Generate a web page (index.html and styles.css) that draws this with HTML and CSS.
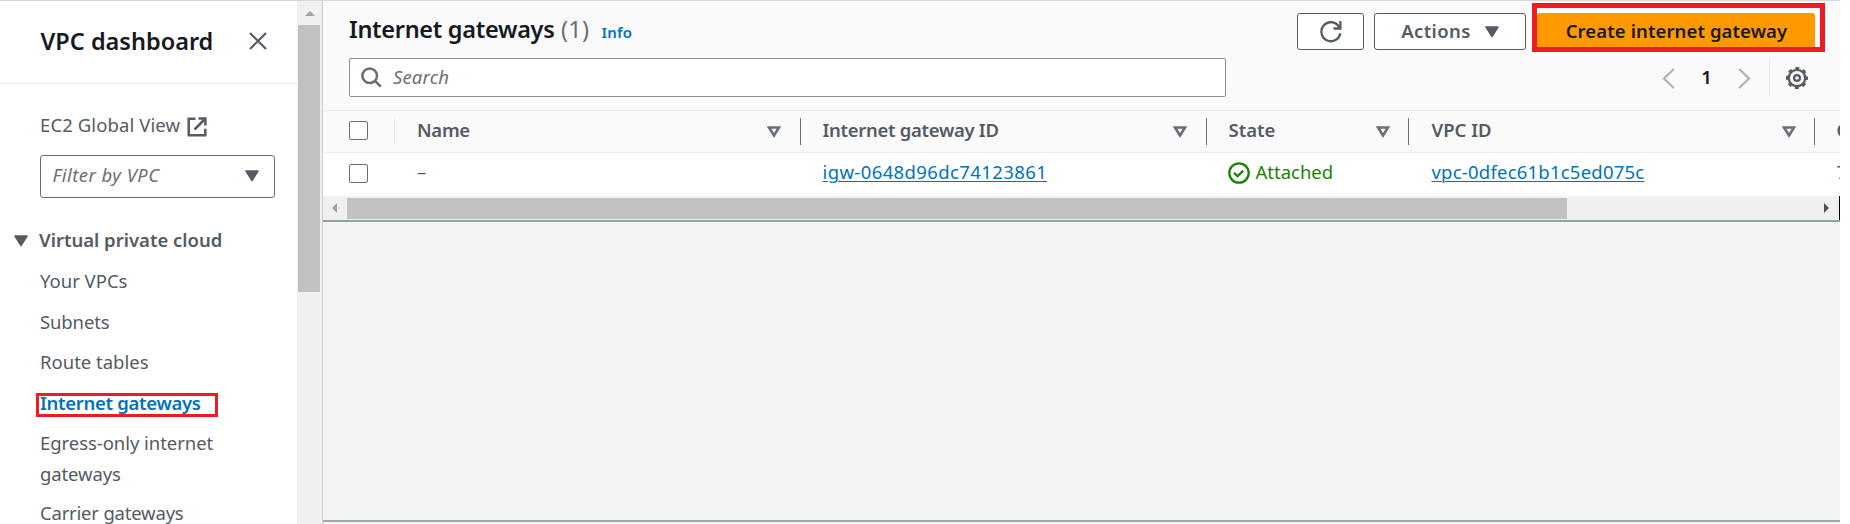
FILE: index.html
```html
<!DOCTYPE html>
<html lang="en">
<head>
<meta charset="utf-8">
<title>Internet gateways | VPC</title>
<link rel="stylesheet" href="styles.css">
</head>
<body>
<div class="app">
  <nav class="sidebar">
    <header class="side-head">
      <h2 class="side-title"><span class="t">VPC dashboard</span></h2>
      <svg class="close" width="20" height="20" viewBox="0 0 20 20"><path d="M2 2l16 16M18 2L2 18" fill="none" stroke="#545b64" stroke-width="2.2"/></svg>
    </header>
    <div class="global"><span class="t t-global">EC2 Global View</span>
      <svg width="20" height="20" viewBox="0 0 20 20"><path d="M8.500 1.800H1.700v16.500h16.600v-6.600M11.500 1.600h6.900v7M18 2L7.500 12.500" fill="none" stroke="#545b64" stroke-width="2.500"/></svg>
    </div>
    <div class="filter"><span class="t t-filter">Filter by VPC</span>
      <svg width="14" height="12" viewBox="0 0 14 12"><path d="M1 1h12L7 10.500z" fill="#545b64" stroke="#545b64" stroke-width="1.500" stroke-linejoin="round"/></svg>
    </div>
    <div class="group">
      <svg width="14" height="12" viewBox="0 0 14 12"><path d="M1 1h12L7 10.500z" fill="#545b64" stroke="#545b64" stroke-width="1.500" stroke-linejoin="round"/></svg>
      <span class="t t-group">Virtual private cloud</span>
    </div>
    <ul class="links">
      <li><span class="t t-your">Your VPCs</span></li>
      <li><span class="t t-sub">Subnets</span></li>
      <li><span class="t t-route">Route tables</span></li>
      <li class="active"><span class="t t-igw">Internet gateways</span><span class="mark mark-link"></span></li>
      <li><span class="t t-egress">Egress-only internet</span><br><span class="t t-gate">gateways</span></li>
      <li><span class="t t-carrier">Carrier gateways</span></li>
    </ul>
  </nav>
  <div class="vscroll">
    <svg width="10" height="5" viewBox="0 0 10 5"><path d="M5 0l5 5H0z" fill="#a3a3a3"/></svg>
    <div class="vthumb"></div>
  </div>
  <main class="main">
    <section class="panel">
      <div class="toolbar">
        <div class="left">
          <h1 class="title"><span class="t t-title">Internet gateways</span><span class="t count">(1)</span><span class="t info">Info</span></h1>
          <div class="search">
            <svg width="21" height="21" viewBox="0 0 21 21"><circle cx="8.700" cy="8.700" r="7.300" fill="none" stroke="#687078" stroke-width="2.500"/><path d="M13.800 13.800l6 5.800" stroke="#687078" stroke-width="2.600"/></svg>
            <span class="t t-search">Search</span>
          </div>
        </div>
        <div class="right">
          <div class="buttons">
            <div class="btn refresh"><svg width="24" height="24" viewBox="0 0 24 24"><path d="M21.300 13.200a9.500 9.500 0 1 1-2.200-7.700l1.600 2.600" fill="none" stroke="#545b64" stroke-width="2.300"/><path d="M21.400 1v7.500h-7" fill="none" stroke="#545b64" stroke-width="2.300"/></svg></div>
            <div class="btn actions"><span class="t t-actions">Actions</span><svg width="14" height="12" viewBox="0 0 14 12"><path d="M1 1h12L7 10.500z" fill="#545b64" stroke="#545b64" stroke-width="1.500" stroke-linejoin="round"/></svg></div>
            <div class="create"><span class="t t-create">Create internet gateway</span><span class="mark mark-btn"></span></div>
          </div>
          <div class="pager">
            <svg width="13" height="21" viewBox="0 0 13 21"><path d="M11.800 1L2 10.500l9.800 9.500" fill="none" stroke="#aab7b8" stroke-width="2.300"/></svg>
            <span class="t page">1</span>
            <svg width="13" height="21" viewBox="0 0 13 21"><path d="M1.200 1L11 10.500L1.200 20" fill="none" stroke="#aab7b8" stroke-width="2.300"/></svg>
            <span class="gear"><svg width="22" height="22" viewBox="0 0 22 22" fill="none" stroke="#545b64"><circle cx="11" cy="11" r="8.200" stroke-width="2.300"/><circle cx="11" cy="11" r="9.900" stroke-width="2.200" stroke-dasharray="4 3.775" stroke-dashoffset="2"/><circle cx="11" cy="11" r="2.900" stroke-width="2.300"/></svg></span>
          </div>
        </div>
      </div>
      <div class="row head">
        <div class="c-check"><span class="box"></span></div>
        <div class="cell c-name"><span class="t t-name">Name</span><svg class="sort" width="14" height="12" viewBox="0 0 14 12"><path d="M2 1.500h10L7 9.500z" fill="none" stroke="#687078" stroke-width="2.600"/></svg></div>
        <div class="cell c-id"><span class="t t-hid">Internet gateway ID</span><svg class="sort" width="14" height="12" viewBox="0 0 14 12"><path d="M2 1.500h10L7 9.500z" fill="none" stroke="#687078" stroke-width="2.600"/></svg></div>
        <div class="cell c-state"><span class="t t-state">State</span><svg class="sort" width="14" height="12" viewBox="0 0 14 12"><path d="M2 1.500h10L7 9.500z" fill="none" stroke="#687078" stroke-width="2.600"/></svg></div>
        <div class="cell c-vpc"><span class="t t-vpc">VPC ID</span><svg class="sort" width="14" height="12" viewBox="0 0 14 12"><path d="M2 1.500h10L7 9.500z" fill="none" stroke="#687078" stroke-width="2.600"/></svg></div>
        <div class="cell c-owner"><span class="t">O</span></div>
      </div>
      <div class="row data">
        <div class="c-check"><span class="box"></span></div>
        <div class="cell c-name"><span class="t">–</span></div>
        <div class="cell c-id"><span class="t link t-igwid">igw-0648d96dc74123861</span></div>
        <div class="cell c-state ok"><svg width="22" height="22" viewBox="0 0 22 22" fill="none" stroke="#1d8102" stroke-width="2.300"><circle cx="11" cy="11" r="9.700"/><path d="M6 10.800l3.600 3.400 5.600-5.600"/></svg><span class="t t-att">Attached</span></div>
        <div class="cell c-vpc"><span class="t link t-vpcid">vpc-0dfec61b1c5ed075c</span></div>
        <div class="cell c-owner"><span class="t">7</span></div>
      </div>
      <div class="hscroll">
        <svg width="5" height="10" viewBox="0 0 5 10"><path d="M5 0v10L0 5z" fill="#a3a3a3"/></svg>
        <div class="hthumb"></div>
        <svg class="fwd" width="5" height="10" viewBox="0 0 5 10"><path d="M0 0v10l5-5z" fill="#505050"/></svg>
      </div>
    </section>
    <div class="split"></div>
  </main>
</div>
</body>
</html>
```

FILE: styles.css
```css
* { box-sizing: border-box; }
body {
  margin: 0;
  width: 1850px;
  height: 524px;
  overflow: hidden;
  background: #fff;
  color: #545b64;
  font-family: "Noto Sans", "Open Sans", sans-serif;
  font-size: 18.5px;
  line-height: 30.5px;
}
svg { display: block; flex: none; }
.t { white-space: nowrap; }
.app { display: flex; width: 1840px; height: 524px; border-top: 1px solid #d5d7d7; }

.sidebar { width: 297px; flex: none; overflow: hidden; }
.side-head { display: flex; align-items: center; height: 83px; padding: 0 0 2px 40.5px; border-bottom: 1px solid #eaeded; }
.side-title { margin: 0; width: 207px; font-size: 23.5px; font-weight: 600; color: #16191f; }
.global { display: flex; align-items: center; gap: 7px; margin-top: 26px; padding-left: 40px; height: 31px; }
.global svg { margin-top: 2px; }
.filter {
  display: flex; align-items: center; justify-content: space-between;
  width: 235px; height: 43px; margin: 14px 0 0 40px; padding: 0 15px 3px 11.5px;
  border: 1px solid #687078; border-radius: 3px;
  font-style: italic; color: #687078;
}
.filter svg { margin-top: 2px; }
.group { display: flex; align-items: center; gap: 11px; height: 31px; margin: 27px 0 0 14px; font-weight: 600; }
.links { list-style: none; margin: 10px 0 0; padding: 0 0 0 40px; display: flex; flex-direction: column; gap: 10px; }
.links li { position: relative; }
.links li:last-child { margin-top: -1px; }
.active { color: #0073bb; font-weight: 600; }
.mark { position: absolute; border: 3px solid #ed1c24; }
.mark-link { left: -4px; top: 5px; width: 182px; height: 24px; }

.vscroll { width: 26px; flex: none; background: #f0f0f0; border-right: 1px solid #c9d0d0; display: flex; flex-direction: column; padding-left: 1px; }
.vscroll svg { margin: 10px 0 9px 7px; }
.vthumb { width: 22px; height: 267px; background: #c1c1c1; }

.main { width: 1517px; flex: none; background: #f2f3f3; display: flex; flex-direction: column; }
.panel { height: 221px; flex: none; border-bottom: 2px solid #95a0a2; background: #fff; }
.toolbar { display: flex; justify-content: space-between; height: 110px; padding-left: 26px; background: #fafafa; border-bottom: 1px solid #eaeded; }
.left { width: 877px; }
.title { display: flex; align-items: baseline; height: 32px; margin: 12px 0 0; font-size: 23.5px; font-weight: 600; line-height: 32px; color: #16191f; }
.count { margin-left: 6.5px; font-weight: 400; color: #687078; letter-spacing: 0.3px; }
.info { margin-left: 12px; font-size: 15px; font-weight: 600; color: #0073bb; letter-spacing: 0.2px; }
.search { display: flex; align-items: center; gap: 11px; height: 39px; margin-top: 13px; padding: 0 0 1px 11px; background: #fff; border: 1px solid #879196; border-radius: 2px; font-style: italic; color: #687078; }
.right { width: 543px; }
.buttons { display: flex; margin-top: 12px; }
.btn { display: flex; align-items: center; justify-content: center; height: 37px; background: #fff; border: 1px solid #545b64; border-radius: 3px; font-weight: 600; }
.refresh { width: 67px; }
.actions { width: 152px; margin-left: 10px; gap: 14px; }
.t-actions { padding-bottom: 1px; }
.create {
  position: relative; isolation: isolate;
  display: flex; align-items: center; justify-content: center;
  width: 278px; height: 34px; margin-left: 11px; padding: 2px 0 0 1px;
  font-weight: 600; color: #16191f;
}
.create::before { content: ""; position: absolute; z-index: -1; inset: 0; background: #ff9900; border-radius: 3px 3px 0 0; }
.mark-btn { z-index: -2; left: -5px; top: -10px; width: 293px; height: 49px; border-width: 5px; background: #fff; }
.pager { display: flex; align-items: center; height: 38px; margin-top: 9px; padding-left: 365px; }
.page { width: 63px; text-align: center; font-weight: 600; color: #16191f; padding-bottom: 2px; }
.gear { display: flex; align-items: center; height: 38px; margin-left: 18px; padding-left: 16px; border-left: 1px solid #eaeded; }

.row { display: flex; align-items: center; overflow: hidden; }
.head { height: 42px; background: #fafafa; border-bottom: 1px solid #eaeded; font-weight: 600; }
.data { height: 43px; }
.c-check { width: 72px; flex: none; padding-left: 26px; }
.head .c-check { border-right: 1px solid #eaeded; height: 27px; padding-top: 3px; }
.data .c-check { padding-bottom: 3px; }
.box { display: block; width: 19px; height: 19px; background: #fff; border: 1px solid #687078; border-radius: 2px; }
.cell { display: flex; align-items: center; flex: none; height: 27px; padding-left: 21.5px; border-right: 1px solid transparent; }
.cell .t { margin-top: -4px; }
.head .cell { justify-content: space-between; padding-right: 19px; border-color: #687078; }
.head .cell .t { margin-top: -2px; }
.c-name { width: 406px; padding-left: 22px; }
.c-id { width: 406px; }
.c-state { width: 202px; }
.head .c-state { padding-right: 18px; }
.c-vpc { width: 406px; padding-left: 22.5px; }
.head .c-vpc { padding-right: 18px; }
.c-owner { width: 60px; padding-left: 21.5px; }
.ok { gap: 6px; padding-left: 20.5px; color: #1d8102; }
.ok svg { margin-top: -3px; }
.link { color: #0073bb; text-decoration: underline; text-decoration-thickness: 1px; text-underline-offset: 2px; }
.hscroll { display: flex; align-items: center; height: 24px; padding-left: 9px; background: #f0f0f0; border-right: 1px solid #000; }
.hthumb { width: 1220px; height: 21px; margin-left: 10px; background: #c1c1c1; }
.fwd { margin-left: 257px; }
.split { flex: none; margin-top: 298px; height: 2px; background: #a0a6a8; }

/* tracking per label */
.t-filter { letter-spacing: 0.45px; }
.t-global { letter-spacing: 0.1px; }
.t-search { letter-spacing: 0.15px; }
.t-sub, .t-gate { letter-spacing: -0.12px; }
.t-egress { letter-spacing: -0.05px; }
.t-carrier { letter-spacing: -0.2px; }
.t-igw { letter-spacing: -0.3px; }
.t-title { letter-spacing: -0.3px; }
.t-actions { letter-spacing: 0.4px; }
.t-create { letter-spacing: 0.1px; }
.t-name, .t-hid { letter-spacing: -0.3px; }
.t-igwid { letter-spacing: 0.39px; }
.t-vpcid { letter-spacing: 0.22px; }
```
